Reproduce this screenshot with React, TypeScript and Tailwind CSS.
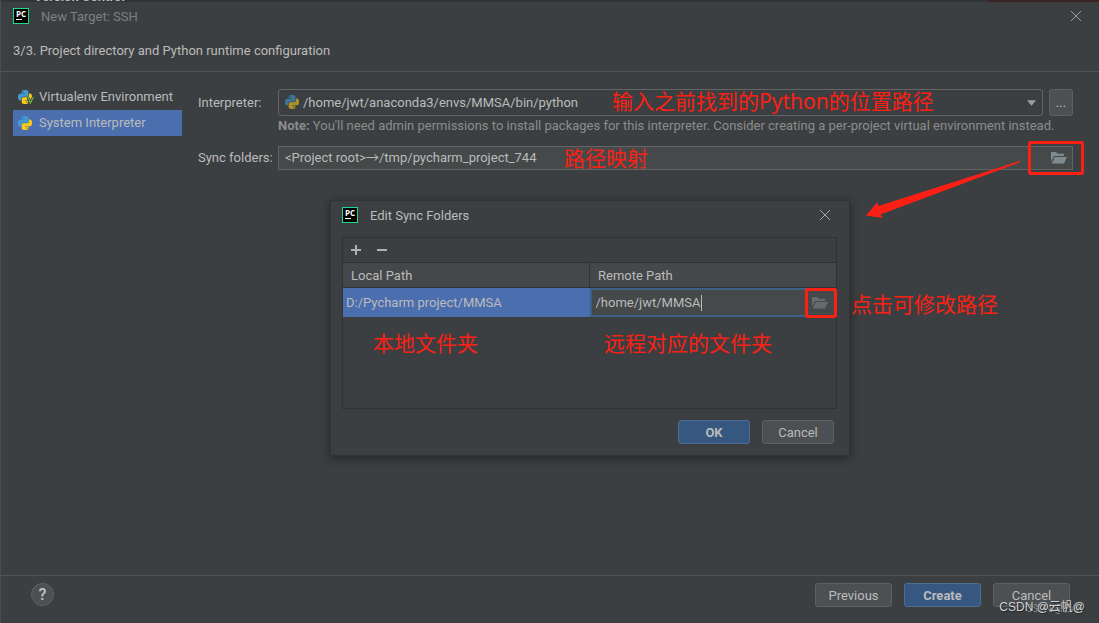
import { useState } from "react"

interface IconProps {
    className?: string;
}

const PythonIcon = ({ className }: IconProps) => (
    <svg viewBox="0 0 24 24" className={`shrink-0 ${className}`} aria-hidden="true">
        <path
            fill="#3f9bd1"
            d="M14.25.18l.9.2.73.26.59.3.45.32.34.34.25.34.16.33.1.3.04.26.02.2-.01.13V8.5l-.05.63-.13.55-.21.46-.26.38-.3.31-.33.25-.35.19-.35.14-.33.1-.3.07-.26.04-.21.02H8.77l-.69.05-.59.14-.5.22-.41.27-.33.32-.27.35-.2.36-.15.37-.1.35-.07.32-.04.27-.02.21v3.06H3.17l-.21-.03-.28-.07-.32-.12-.35-.18-.36-.26-.36-.36-.35-.46-.32-.59-.28-.73-.21-.88-.14-1.05-.05-1.23.06-1.22.16-1.04.24-.87.32-.71.36-.57.4-.44.42-.33.42-.24.4-.16.36-.1.32-.05.24-.01h.16l.06.01h8.16v-.83H6.18l-.01-2.75-.02-.37.05-.34.11-.31.17-.28.25-.26.31-.23.38-.2.44-.18.51-.15.58-.12.64-.1.71-.06.77-.04.84-.02 1.27.05zm-6.3 1.98l-.23.33-.08.41.08.41.23.34.33.22.41.09.41-.09.33-.22.23-.34.08-.41-.08-.41-.23-.33-.33-.22-.41-.09-.41.09z"
        />
        <path
            fill="#f8c81c"
            d="M21.1 6.11l.28.06.32.12.35.18.36.27.36.35.35.47.32.59.28.73.21.88.14 1.04.05 1.23-.06 1.23-.16 1.04-.24.86-.32.71-.36.57-.4.45-.42.33-.42.24-.4.16-.36.09-.32.05-.24.02-.16-.01h-8.22v.82h5.84l.01 2.76.02.36-.05.34-.11.31-.17.29-.25.25-.31.24-.38.2-.44.17-.51.15-.58.13-.64.09-.71.07-.77.04-.84.01-1.27-.04-1.07-.14-.9-.2-.73-.25-.59-.3-.45-.33-.34-.34-.25-.34-.16-.33-.1-.3-.04-.25-.02-.2.01-.13v-5.34l.05-.64.13-.54.21-.46.26-.38.3-.32.33-.24.35-.2.35-.14.33-.1.3-.06.26-.04.21-.02.13-.01h5.84l.69-.05.59-.14.5-.21.41-.28.33-.32.27-.35.2-.36.15-.36.1-.35.07-.32.04-.28.02-.21V6.07h2.09l.14.01zm-6.47 14.25l-.23.33-.08.41.08.41.23.33.33.23.41.08.41-.08.33-.23.23-.33.08-.41-.08-.41-.23-.33-.33-.23-.41-.08-.41.08z"
        />
    </svg>
)

const FolderIcon = ({ className }: IconProps) => (
    <svg viewBox="0 0 16 12" className={className} fill="currentColor" aria-hidden="true">
        <path d="M0 9.500V0h5l1.600 1.800H13V4H3.200z" />
        <path d="M3.800 5H16l-3 6.500H.8z" />
    </svg>
)

const CloseIcon = () => (
    <svg viewBox="0 0 10 10" className="size-[10px]" stroke="currentColor" aria-hidden="true">
        <path d="M0 0l10 10M10 0L0 10" />
    </svg>
)

// PyCharm app badge
const AppIcon = () => (
    <span className="flex size-4 shrink-0 flex-col gap-px border border-[#21d789] bg-black pt-px pl-[2px] font-['Open_Sans',sans-serif] text-[8px] leading-[8px] font-bold text-white">
        PC
        <span className="h-px w-[6px] bg-white" />
    </span>
)

interface DialogButtonProps {
    children: string;
    primary?: boolean;
    className?: string;
}

const DialogButton = ({ children, primary, className }: DialogButtonProps) => (
    <button
        type="button"
        className={`h-6 rounded-[3px] border pt-px ${
            primary ? "border-[#4c708c] bg-[#365880] font-bold" : "border-[#5e6060] bg-[#4c5052]"
        } ${className}`}
    >
        {children}
    </button>
)

const NOTE_CLASS = "pointer-events-none absolute font-['Noto_Sans','Noto_Sans_CJK_SC',sans-serif] text-[21px] leading-6 whitespace-nowrap text-[#fc2014]"

function SyncFoldersDialog() {
    const [remote, setRemote] = useState("/home/jwt/MMSA")

    return (
        <div
            role="dialog"
            aria-label="Edit Sync Folders"
            className="absolute top-[200px] left-[329px] w-[520px] border border-[#313335] bg-[#3c3f41] pr-3 pb-[11px] pl-[11px] shadow-[0_2px_10px_rgba(0,0,0,0.45)]"
        >
            <div className="flex h-9 items-center pb-2">
                <AppIcon />
                <h2 className="ml-3 flex-1 pt-[2px]">Edit Sync Folders</h2>
                <button type="button" aria-label="Close" className="mr-[7px] text-[#a5a7a8]">
                    <CloseIcon />
                </button>
            </div>

            <div className="relative h-[172px] border border-[#323232]">
                <div className="flex h-6 items-center gap-4 px-2 text-[#afb1b3]">
                    <button type="button" aria-label="Add" className="size-[10px]">
                        <svg viewBox="0 0 10 10" fill="currentColor"><path d="M4 0h2v4h4v2H6v4H4V6H0V4h4z" /></svg>
                    </button>
                    <button type="button" aria-label="Remove" className="size-[10px]">
                        <svg viewBox="0 0 10 10" fill="currentColor"><path d="M0 4h10v2H0z" /></svg>
                    </button>
                </div>
                <table className="w-full table-fixed border-collapse text-left">
                    <thead>
                        <tr className="h-[25px] border-y border-[#323232] bg-[#45484a]">
                            <th className="border-r border-[#323232] pt-[2px] pl-2 font-normal">Local Path</th>
                            <th className="pt-[2px] pl-2 font-normal">Remote Path</th>
                        </tr>
                    </thead>
                    <tbody>
                        <tr className="h-[29px]">
                            <td className="bg-[#4b6eaf] pl-[3px]">D:/Pycharm project/MMSA</td>
                            <td className="p-0">
                                <div className="flex h-[29px] items-center border-2 border-[#3d6185] bg-[#45494a] pl-1">
                                    <input
                                        aria-label="Remote path"
                                        value={remote}
                                        onChange={(e) => setRemote(e.target.value)}
                                        className="field-sizing-content bg-transparent outline-none"
                                    />
                                    <span className="h-4 w-px bg-[#bbbbbb]" />
                                    <button type="button" aria-label="Browse remote path" className="mr-[6px] ml-auto text-[#646c71]">
                                        <FolderIcon className="h-3 w-4" />
                                    </button>
                                </div>
                            </td>
                        </tr>
                    </tbody>
                </table>
                <span className="pointer-events-none absolute top-[50px] -right-px h-[30px] w-8 rounded-[3px] border-3 border-[#fc2014]" />
                <span className={`${NOTE_CLASS} top-[93px] left-[30px]`}>本地文件夹</span>
                <span className={`${NOTE_CLASS} top-[93px] left-[261px]`}>远程对应的文件夹</span>
                <span className={`${NOTE_CLASS} top-[54px] left-[508px]`}>点击可修改路径</span>
            </div>

            <div className="mt-[11px] flex justify-end gap-3 pr-[3px]">
                <DialogButton primary className="w-[72px]">OK</DialogButton>
                <DialogButton className="w-[72px]">Cancel</DialogButton>
            </div>
        </div>
    )
}

export default function App() {
    const [folders, setFolders] = useState("<Project root>→/tmp/pycharm_project_744")

    return (
        <div className="relative flex min-h-screen flex-col overflow-hidden border-l border-[#4b4d4f] bg-[#3c3f41] font-[Roboto,'Noto_Sans_CJK_SC',sans-serif] text-[13px] leading-4 text-[#bbbbbb]">
            {/* Sliver of the IDE window behind */}
            <div className="flex h-[2px] items-end overflow-hidden bg-[#313537] pl-[33px] font-bold">
                <span className="-mb-[3px]">Version Control</span>
                <span className="ml-auto h-full w-[111px] bg-[#3a2426]" />
            </div>

            <header className="border-b border-[#515456] pl-3">
                <div className="flex h-7 items-center pr-[18px]">
                    <AppIcon />
                    <h1 className="ml-3 flex-1 pt-[2px] text-[#7d7f80]">New Target: SSH</h1>
                    <button type="button" aria-label="Close" className="text-[#9b9d9e]">
                        <CloseIcon />
                    </button>
                </div>
                <p className="pt-[13px] pb-3">3/3. Project directory and Python runtime configuration</p>
            </header>

            <main className="flex flex-1 items-start gap-4 pt-3 pr-[26px] pl-3">
                <ul className="w-[169px] shrink-0">
                    <li>
                        <button type="button" className="relative flex h-[26px] w-full items-center gap-[7px] pl-[5px] whitespace-nowrap">
                            <PythonIcon className="size-[14px]" />
                            Virtualenv Environment
                            <svg viewBox="0 0 7 7" className="absolute top-[13px] left-[14px] size-[7px]" fill="none">
                                <path d="M.5 0L3.500 6 6.500 0" stroke="#3c3f41" strokeWidth="3" />
                                <path d="M.7 0L3.500 6 6.300 0" stroke="#62b543" strokeWidth="1.300" />
                            </svg>
                        </button>
                    </li>
                    <li>
                        <button type="button" className="flex h-[26px] w-full items-center gap-[7px] bg-[#4b6eaf] pl-[5px] whitespace-nowrap">
                            <PythonIcon className="size-[14px]" />
                            System Interpreter
                        </button>
                    </li>
                </ul>

                <form className="grid min-w-0 flex-1 grid-cols-[80px_minmax(0,1fr)] items-center pt-[5px]">
                    <label htmlFor="interpreter">Interpreter:</label>
                    <div className="flex gap-[6px]">
                        <div className="relative flex-1">
                            <PythonIcon className="absolute top-[6px] left-[7px] size-[14px] opacity-60" />
                            <select
                                id="interpreter"
                                className="h-[27px] w-full appearance-none rounded-[3px] border border-[#646464] bg-[#3c3f41] pl-6 outline-none"
                            >
                                <option>/home/jwt/anaconda3/envs/MMSA/bin/python</option>
                            </select>
                            <svg viewBox="0 0 10 6" className="pointer-events-none absolute top-[11px] right-[7px] h-[6px] w-[9px]" fill="#9da0a2">
                                <path d="M0 0h10L5 6z" />
                            </svg>
                            <span className={`${NOTE_CLASS} top-0 left-[334px]`}>输入之前找到的Python的位置路径</span>
                        </div>
                        <button type="button" aria-label="Choose interpreter" className="w-6 rounded-[3px] border border-[#5e6060] bg-[#4c5052]">
                            ...
                        </button>
                    </div>

                    <p className="col-start-2 pt-[2px] pb-3 whitespace-nowrap text-[#8c8c8c]">
                        <b>Note:</b> You'll need admin permissions to install packages for this interpreter. Consider creating a per-project virtual environment instead.
                    </p>

                    <label htmlFor="folders">Sync folders:</label>
                    <div className="relative flex h-6 items-center border border-[#646464] bg-[#45494a] pr-[5px] pl-[6px]">
                        <input
                            id="folders"
                            value={folders}
                            onChange={(e) => setFolders(e.target.value)}
                            className="min-w-0 flex-1 bg-transparent outline-none"
                        />
                        <button type="button" aria-label="Edit sync folders" className="text-[#7f8b91]">
                            <FolderIcon className="h-3 w-4" />
                        </button>
                        <span className={`${NOTE_CLASS} -top-px left-[285px]`}>路径映射</span>
                        <span className="pointer-events-none absolute -top-[6px] -right-3 h-[34px] w-14 rounded-[3px] border-3 border-[#fc2014]" />
                    </div>
                </form>
            </main>

            <footer className="flex h-12 items-start border-t border-[#515456] pt-[7px] pr-[29px] pl-[30px]">
                <button type="button" aria-label="Help" className="size-[23px] rounded-full border border-[#5e6060] bg-[#4c5052] text-[16px] leading-5 font-semibold">
                    ?
                </button>
                <div className="ml-auto flex gap-3">
                    <DialogButton className="w-[77px]">Previous</DialogButton>
                    <DialogButton primary className="w-[77px]">Create</DialogButton>
                    <DialogButton className="w-[77px]">Cancel</DialogButton>
                </div>
            </footer>

            <SyncFoldersDialog />

            {/* Arrow from the folder button to the dialog */}
            <svg viewBox="0 0 156 59" className="pointer-events-none absolute top-[160px] left-[864px] h-[59px] w-[156px]" fill="#fc2014" aria-hidden="true">
                <path d="M155 .8L13.500 46 12.300 42.300 1 55.500 17.700 58 15.500 54.500 155 2.300z" />
            </svg>

            <span className="pointer-events-none absolute right-4 bottom-2 text-[10px] leading-3 text-[#8e9091]">CSDN @云帆</span>
            <span className="pointer-events-none absolute right-[14px] bottom-2 font-['Liberation_Sans','Noto_Sans_CJK_SC',sans-serif] text-[12px] whitespace-nowrap text-[#d0d2d3] [text-shadow:1px_1px_1px_#222]">
                CSDN @云帆@
            </span>
        </div>
    )
}
